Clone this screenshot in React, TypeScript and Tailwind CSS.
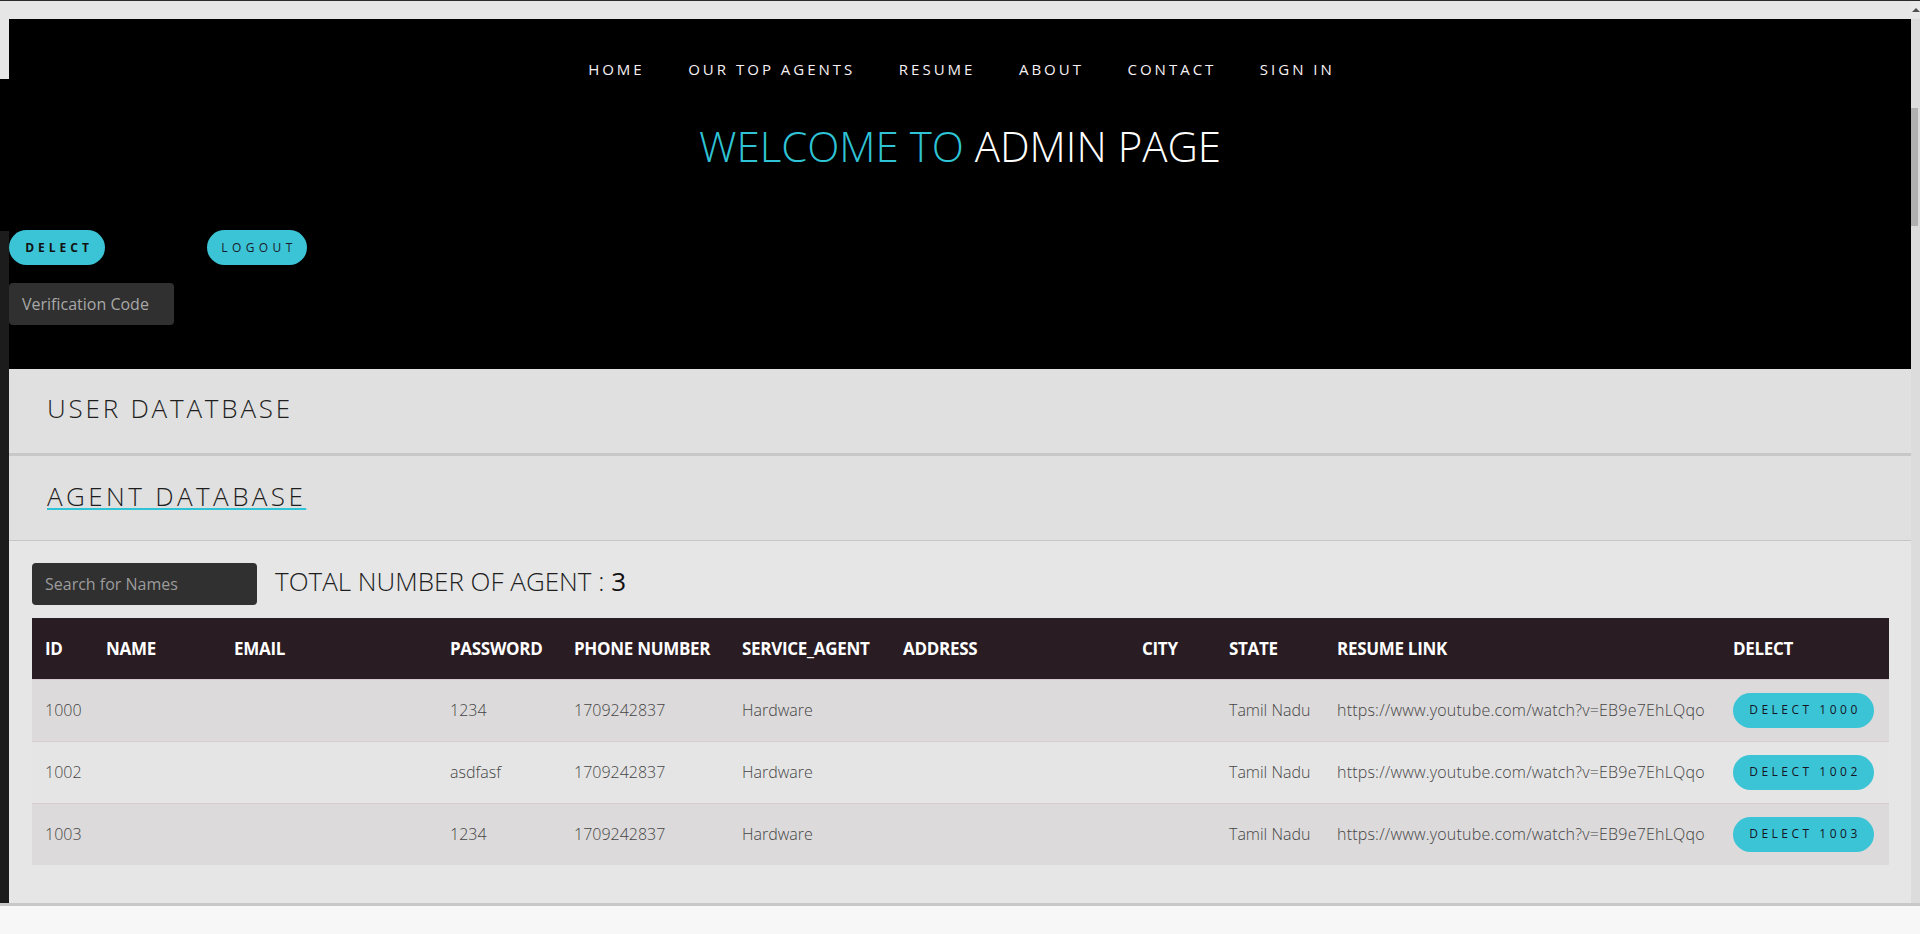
import React from 'react'

const navLinks = ['HOME', 'OUR TOP AGENTS', 'RESUME', 'ABOUT', 'CONTACT', 'SIGN IN']

const columns = [
  { label: 'ID', w: 'w-[61px]' },
  { label: 'NAME', w: 'w-[128px]' },
  { label: 'EMAIL', w: 'w-[216px]' },
  { label: 'PASSWORD', w: 'w-[124px]' },
  { label: 'PHONE NUMBER', w: 'w-[168px]' },
  { label: 'SERVICE_AGENT', w: 'w-[161px]' },
  { label: 'ADDRESS', w: 'w-[239px]' },
  { label: 'CITY', w: 'w-[87px]' },
  { label: 'STATE', w: 'w-[108px]' },
  { label: 'RESUME LINK', w: 'w-[396px]' },
  { label: 'DELECT', w: 'w-[169px]' },
]

const agents = [
  { id: '1000', password: '1234' },
  { id: '1002', password: 'asdfasf' },
  { id: '1003', password: '1234' },
]

export default function App() {
  return (
    <div className="flex h-[934px] w-[1920px] flex-col overflow-hidden border-t border-[#2b2b2b] bg-[#f7f7f7] font-['Open_Sans',sans-serif]">
      <div className="flex h-[902px]">
        <div className="flex flex-1 flex-col">
          {/* browser-ish top strip */}
          <div className="h-[18px] bg-[#e6e6e6]" />

          <div className="flex flex-1">
            {/* left edge strip */}
            <div className="flex w-[9px] flex-col">
              <div className="h-[60px] bg-[#e6e6e6]" />
              <div className="h-[152px] bg-black" />
              <div className="flex-1 bg-[#1c1c1c]" />
            </div>

            <div className="flex flex-1 flex-col">
              {/* Header */}
              <header className="flex h-[350px] flex-col bg-black">
                <nav className="flex justify-center gap-[43.5px] pt-[38px] pl-[3px]">
                  {navLinks.map((link) => (
                    <a key={link} href="#" className="text-[15px] leading-6 tracking-[3px] text-[#f7f1f5]">
                      {link}
                    </a>
                  ))}
                </nav>

                <h1 className="mt-[38px] text-center text-[42px] font-light leading-[54px]">
                  <span className="text-[#2fc3d6]">WELCOME TO </span>
                  <span className="text-white">ADMIN PAGE</span>
                </h1>

                <div className="mt-[57px] flex gap-[102px]">
                  <button className="flex h-[35px] w-[96px] items-center justify-center rounded-full bg-[#3bc4d5] pl-[4px] text-[12px] font-bold tracking-[4px] text-[#111]">
                    DELECT
                  </button>
                  <button className="flex h-[35px] w-[100px] items-center justify-center rounded-full bg-[#3bc4d5] pl-[4px] text-[12px] tracking-[4.4px] text-[#1b1b2b]">
                    LOGOUT
                  </button>
                </div>

                <input
                  placeholder="Verification Code"
                  className="mt-[18px] h-[42px] w-[165px] rounded-[4px] bg-[#303030] px-[13px] text-[16px] outline-none placeholder:text-[#a8a8a8]"
                />
              </header>

              {/* User database panel */}
              <div className="flex h-[87px] items-center border-b-[3px] border-[#c8c8c8] bg-[#e0e0e0] pb-[5px] pl-[38px]">
                <h2 className="text-[26px] font-light tracking-[2.8px] text-[#1e1e1e]">USER DATATBASE</h2>
              </div>

              {/* Agent database panel */}
              <div className="flex h-[85px] items-center border-b border-[#c6c6c6] bg-[#e0e0e0] pb-[3px] pl-[38px]">
                <h2 className="text-[26px] font-light tracking-[3.4px] text-[#1e1e1e] underline decoration-[#2fc3d6] decoration-2 underline-offset-[2px]">
                  AGENT DATABASE
                </h2>
              </div>

              <div className="flex-1 bg-[#e6e6e6] pl-[23px] pr-[22px] pt-[22px]">
                <div className="flex items-center gap-[18px]">
                  <input
                    placeholder="Search for Names"
                    className="h-[42px] w-[225px] rounded-[4px] bg-[#303030] px-[13px] text-[16px] outline-none placeholder:text-[#9c9c9c]"
                  />
                  <p className="-mt-[5px] text-[26px] font-light text-[#1e1e1e]">
                    TOTAL NUMBER OF AGENT : <span className="font-normal text-[#111]">3</span>
                  </p>
                </div>

                <table className="mt-[13px] w-[1857px] table-fixed border-collapse text-left">
                  <thead>
                    <tr className="h-[61px] bg-[#291c22]">
                      {columns.map((col) => (
                        <th key={col.label} className={`${col.w} pl-[13px] text-[17px] font-bold tracking-[-0.3px] text-white`}>
                          {col.label}
                        </th>
                      ))}
                    </tr>
                  </thead>
                  <tbody>
                    {agents.map((agent, i) => (
                      <tr
                        key={agent.id}
                        className={`h-[62px] border-t border-[#d6cbcf] text-[16px] font-light text-[#454545] ${
                          i % 2 === 0 ? 'bg-[#dcdadb]' : 'bg-[#e6e5e6]'
                        }`}
                      >
                        <td className="pl-[13px]">{agent.id}</td>
                        <td className="pl-[13px]" />
                        <td className="pl-[13px]" />
                        <td className="pl-[13px]">{agent.password}</td>
                        <td className="pl-[13px]">1709242837</td>
                        <td className="pl-[13px]">Hardware</td>
                        <td className="pl-[13px]" />
                        <td className="pl-[13px]" />
                        <td className="whitespace-nowrap pl-[13px]">Tamil Nadu</td>
                        <td className="whitespace-nowrap pl-[13px] tracking-[0.2px]">https://www.youtube.com/watch?v=EB9e7EhLQqo</td>
                        <td className="pl-[13px]">
                          <button className="flex h-[35px] w-[141px] items-center justify-center rounded-full bg-[#3bc4d5] pl-[3px] text-[12px] font-normal tracking-[3.5px] text-[#151525]">
                            DELECT {agent.id}
                          </button>
                        </td>
                      </tr>
                    ))}
                  </tbody>
                </table>
              </div>
            </div>
          </div>
        </div>

        {/* scrollbar */}
        <div className="flex w-[9px] flex-col items-start bg-[#dcdcdc]">
          <div className="flex h-[18px] w-[9px] items-center justify-center bg-[#e8e8e8]">
            <div className="h-0 w-0 border-x-[4px] border-b-[4px] border-x-transparent border-b-[#505050]" />
          </div>
          <div className="mt-[89px] h-[118px] w-[7px] bg-[#b0b0b0]" />
        </div>
      </div>
      <div className="h-[3px] bg-[#c8c8c8]" />
    </div>
  )
}
